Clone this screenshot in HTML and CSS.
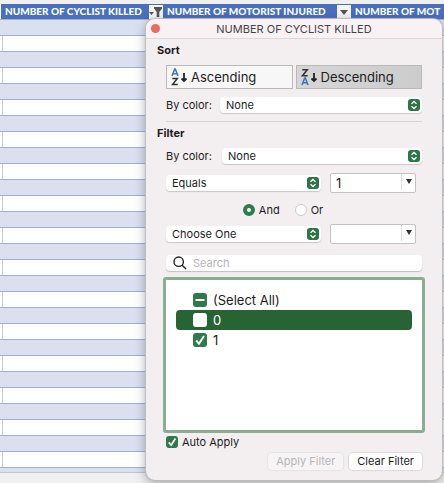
FILE: index.html
```
<!DOCTYPE html>
<html lang="en">
<head>
<meta charset="utf-8">
<title>Column filter</title>
<link rel="stylesheet" href="styles.css">
</head>
<body>
<main class="workbook">
  <div class="sheet">
    <div class="headings">
      <div class="heading">
        <span>NUMBER OF CYCLIST KILLED</span>
        <button class="heading-button" aria-label="Filter cyclist killed">
          <svg width="14" height="14" viewBox="0 0 14 14"><path d="M0 7h5L2.500 10z M5 2h8v1.500L10.300 7v5H7.700V7L5 3.500z" fill="#555"/></svg>
        </button>
      </div>
      <div class="heading heading-wide">
        <span>NUMBER OF MOTORIST INJURED</span>
        <button class="heading-button" aria-label="Filter motorist injured">
          <svg width="14" height="14" viewBox="0 0 14 14"><path d="M3 5h8L7 10z" fill="#555"/></svg>
        </button>
      </div>
      <div class="heading"><span>NUMBER OF MOT</span></div>
    </div>
    <div class="rows"></div>
  </div>

  <section class="dialog" aria-labelledby="dialog-title">
    <header class="titlebar">
      <button class="close" aria-label="Close"></button>
      <h1 id="dialog-title">NUMBER OF CYCLIST KILLED</h1>
    </header>
    <form class="panel">
      <h2>Sort</h2>
      <div class="sort-buttons">
        <button type="button" class="sort-button">
          <svg width="17" height="18" viewBox="0 0 17 18" fill="none" stroke-width="1.500"><path d="M1 8l2.700-7h.6L7 8M2 5.700h4" stroke="#3b73bd"/><path d="M1.300 10.500h5L1.500 16.500h5.200" stroke="#333"/><path d="M13 5v8M10.500 10.500L13 13l2.500-2.500" stroke="#222" stroke-width="1.800"/></svg>
          Ascending
        </button>
        <button type="button" class="sort-button pressed">
          <svg width="17" height="18" viewBox="0 0 17 18" fill="none" stroke-width="1.500"><path d="M1.300 1.700h5L1.500 7.700h5.200" stroke="#333"/><path d="M1 17l2.700-7h.6L7 17M2 14.700h4" stroke="#3b73bd"/><path d="M13 5v8M10.500 10.500L13 13l2.500-2.500" stroke="#222" stroke-width="1.800"/></svg>
          Descending
        </button>
      </div>
      <div class="color-row">
        <label for="sort-color">By color:</label>
        <span class="popup"><select id="sort-color"><option>None</option></select><svg class="stepper" viewBox="0 0 12 12"><path d="M3.500 4.800L6 2.500l2.500 2.300M3.500 7.200L6 9.500l2.500-2.300"/></svg></span>
      </div>
      <hr>
      <h2>Filter</h2>
      <div class="color-row filter-color">
        <label for="filter-color">By color:</label>
        <span class="popup"><select id="filter-color"><option>None</option></select><svg class="stepper" viewBox="0 0 12 12"><path d="M3.500 4.800L6 2.500l2.500 2.300M3.500 7.200L6 9.500l2.500-2.300"/></svg></span>
      </div>
      <div class="condition">
        <span class="popup"><select aria-label="First condition"><option>Equals</option></select><svg class="stepper" viewBox="0 0 12 12"><path d="M3.500 4.800L6 2.500l2.500 2.300M3.500 7.200L6 9.500l2.500-2.300"/></svg></span>
        <span class="combo"><input type="text" value="1" aria-label="First value"><button type="button" aria-label="Show first values"><svg width="6" height="6" viewBox="0 0 6 6"><path d="M0 0h6L3 5z" fill="#333"/></svg></button></span>
      </div>
      <div class="joins">
        <label><input type="radio" name="join" checked>And</label>
        <label><input type="radio" name="join">Or</label>
      </div>
      <div class="condition">
        <span class="popup"><select aria-label="Second condition"><option>Choose One</option></select><svg class="stepper" viewBox="0 0 12 12"><path d="M3.500 4.800L6 2.500l2.500 2.300M3.500 7.200L6 9.500l2.500-2.300"/></svg></span>
        <span class="combo"><input type="text" aria-label="Second value"><button type="button" aria-label="Show second values"><svg width="6" height="6" viewBox="0 0 6 6"><path d="M0 0h6L3 5z" fill="#333"/></svg></button></span>
      </div>
      <div class="search">
        <svg width="14" height="14" viewBox="0 0 14 14" fill="none" stroke="#222" stroke-width="1.400"><circle cx="5.700" cy="5.700" r="4.700"/><path d="M9.200 9.200L13 13"/></svg>
        <input type="search" placeholder="Search" aria-label="Search">
      </div>
      <div class="values">
        <label class="value"><span class="tick"><input type="checkbox" checked><svg viewBox="0 0 14 14"><path d="M2.500 7h9"/></svg></span>(Select All)</label>
        <label class="value selected"><span class="tick"><input type="checkbox"></span>0</label>
        <label class="value"><span class="tick"><input type="checkbox" checked><svg viewBox="0 0 14 14"><path d="M3.200 7.500L6 10.700l5-7.700"/></svg></span>1</label>
      </div>
      <label class="auto"><span class="tick"><input type="checkbox" checked><svg viewBox="0 0 14 14"><path d="M3.200 7.500L6 10.700l5-7.700"/></svg></span>Auto Apply</label>
      <div class="actions">
        <button type="button" disabled>Apply Filter</button>
        <button type="button">Clear Filter</button>
      </div>
    </form>
  </section>
</main>
</body>
</html>
```
FILE: styles.css
```
* { box-sizing: border-box; }

body {
  margin: 0;
  background: #eeeeee;
  color: #1c1c1c;
  font: 11px/16px Inter, "Liberation Sans", sans-serif;
}

button, input, select { font: inherit; color: inherit; margin: 0; padding: 0; }

.workbook {
  position: relative;
  min-height: 100vh;
  overflow: hidden;
  display: flex;
  flex-direction: column;
}

/* Worksheet */
.sheet {
  flex: 1;
  display: flex;
  flex-direction: column;
  padding: 4px 0 10px;
  background: #f0f0f0;
}

.headings {
  display: flex;
  height: 15px;
  background: #4a6fbf;
  border-left: 1px solid #ffffff;
}

.heading {
  flex: none;
  display: flex;
  align-items: center;
  gap: 4px;
  padding-left: 4px;
  color: #ffffff;
  font: 900 10px/15px Lato, sans-serif;
  white-space: nowrap;
}

.heading span { min-width: 140px; }
.heading-wide span { min-width: 166px; }
.heading:last-child span { min-width: 0; }

.heading-button {
  width: 14px;
  height: 14px;
  border: 0;
  background: #f5f5f5;
}

.heading-button svg { display: block; }

/* Banded rows, with a column rule on the white ones */
.rows {
  flex: 1;
  border-bottom: 1px solid #bfc4ce;
  background:
    linear-gradient(transparent 0 17px, #c9cbd0 17px 32px) 2px 0 / 1px 32px repeat-y,
    repeating-linear-gradient(#9bb0da 0 1px, #dae0f0 1px 16px, #9bb0da 16px 17px, #ffffff 17px 32px);
}

/* Filter dialog */
.dialog {
  position: absolute;
  top: 19px;
  left: 146px;
  right: 2px;
  border-radius: 9px;
  background: #f3eff1;
  box-shadow: 0 0 1px 1px #bcbcc2, 0 3px 12px rgba(0, 0, 0, 0.35);
}

.titlebar {
  display: flex;
  align-items: center;
  height: 20px;
  padding: 0 14px 0 5px;
  border-bottom: 1px solid #dcd8da;
  border-radius: 9px 9px 0 0;
  background: #f8f2f5;
}

.close {
  width: 9px;
  height: 9px;
  border: 0;
  border-radius: 50%;
  background: #ec6a5e;
}

h1 {
  flex: 1;
  margin: 0;
  color: #444444;
  font-size: 11px;
  font-weight: 400;
  line-height: 18px;
  text-align: center;
}

.panel {
  display: flex;
  flex-direction: column;
  padding: 3px 20px 10px;
}

h2 {
  margin: 0 0 0 -9px;
  font-size: 11px;
  font-weight: 700;
  line-height: 16px;
}

.sort-buttons {
  display: grid;
  grid-template-columns: 1fr 1fr;
  gap: 3px;
  margin-top: 7px;
}

.sort-button {
  display: flex;
  align-items: center;
  gap: 3px;
  height: 24px;
  padding-left: 4px;
  border: 1px solid #b9b9b9;
  background: #f8f7f8;
  font-size: 13px;
}

.sort-button.pressed { background: linear-gradient(90deg, #d6d6d6, #cccccc); }

.color-row {
  display: flex;
  align-items: center;
  gap: 8px;
  margin-top: 8px;
}

.color-row label { flex: none; width: 46px; white-space: nowrap; }
.filter-color { gap: 10px; margin-top: 7px; }

.popup {
  position: relative;
  flex: 1;
  display: flex;
}

select {
  appearance: none;
  width: 100%;
  height: 16px;
  padding: 0 18px 0 6px;
  border: 0;
  border-radius: 4px;
  background: #ffffff;
  box-shadow: 0 1px 1px #cac6c8;
}

.stepper {
  position: absolute;
  top: 2px;
  right: 2px;
  width: 12px;
  height: 12px;
  border-radius: 3px;
  background: #2c7546;
  fill: none;
  stroke: #ffffff;
  stroke-width: 1.3;
  pointer-events: none;
}

hr {
  width: 100%;
  margin: 8px 0 3px;
  border: 0;
  border-top: 1px solid #d9d5d7;
}

.condition {
  display: flex;
  align-items: center;
  gap: 9px;
  margin: 9px 6px 0 0;
}

.combo {
  flex: none;
  display: flex;
  width: 86px;
  height: 20px;
  border: 1px solid #c6c2c4;
  border-radius: 2px;
  background: #ffffff;
}

.combo input {
  flex: 1;
  min-width: 0;
  padding-left: 5px;
  border: 0;
  background: transparent;
  font-size: 13px;
}

.combo button {
  display: flex;
  align-items: center;
  justify-content: center;
  width: 14px;
  height: 16px;
  border: 0;
  border-left: 1px solid #dddddd;
  background: transparent;
}

.joins {
  display: flex;
  justify-content: center;
  gap: 15px;
  margin-top: 9px;
  padding-right: 22px;
}

.joins + .condition { margin-top: 6px; }
.joins label { display: flex; align-items: center; gap: 4px; }

.joins input {
  appearance: none;
  width: 12px;
  height: 12px;
  border: 1px solid #cfcbcd;
  border-radius: 50%;
  background: #ffffff;
}

.joins input:checked { border: 4px solid #2c7d4b; }

.search {
  display: flex;
  align-items: center;
  gap: 6px;
  height: 16px;
  margin-top: 11px;
  padding-left: 7px;
  border-radius: 4px;
  background: #ffffff;
  box-shadow: 0 1px 1px #c4c0c2;
}

.search input {
  appearance: none;
  flex: 1;
  min-width: 0;
  height: 16px;
  border: 0;
  background: transparent;
}

.search input::placeholder { color: #b5b3b4; }

.values {
  min-height: 156px;
  margin: 6px -3px 0;
  padding: 10px;
  border: 3px solid #8bad91;
  border-radius: 3px;
  background: #ffffff;
}

.value {
  display: flex;
  align-items: center;
  gap: 6px;
  height: 20px;
  padding-left: 17px;
  border-radius: 4px;
  font-size: 13px;
}

.value.selected { background: #286333; color: #ffffff; }

.tick {
  position: relative;
  flex: none;
  display: flex;
  width: 14px;
  height: 14px;
}

.tick input {
  appearance: none;
  width: 100%;
  height: 100%;
  border-radius: 3px;
  background: #ffffff;
}

.tick input:checked { background: #2f7a4b; }

.tick svg {
  position: absolute;
  inset: 0;
  fill: none;
  stroke: #ffffff;
  stroke-width: 2;
  pointer-events: none;
}

.auto {
  display: flex;
  align-items: center;
  gap: 4px;
  margin-top: 1px;
}

.auto .tick { width: 12px; height: 12px; }

.actions {
  display: flex;
  justify-content: flex-end;
  gap: 6px;
  margin-top: 3px;
}

.actions button {
  height: 17px;
  padding: 0 8px;
  border: 0;
  border-radius: 4px;
  background: #ffffff;
  box-shadow: 0 0 1px 1px #dcd8da;
  line-height: 17px;
}

.actions button:disabled { background: #f7f4f6; color: #b8b5b7; box-shadow: 0 0 1px 1px #e6e2e4; }
```
